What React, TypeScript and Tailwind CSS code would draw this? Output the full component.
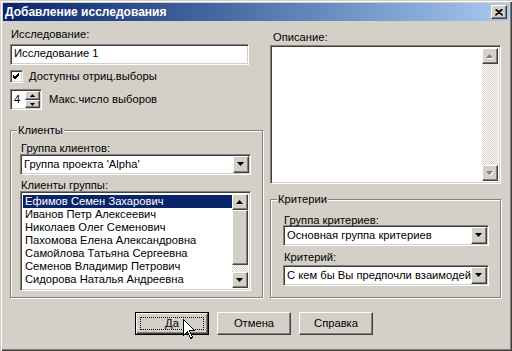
import React from "react";

const FONT = "font-['Liberation_Sans',Arial,sans-serif]";
const SUNKEN =
  "border border-t-[#808080] border-l-[#808080] border-b-white border-r-white shadow-[inset_1px_1px_0_#404040,inset_-1px_-1px_0_#d4d0c8]";
const RAISED =
  "border border-t-white border-l-white border-b-[#404040] border-r-[#404040] shadow-[inset_-1px_-1px_0_#808080]";
const HATCH =
  "bg-[repeating-conic-gradient(#ffffff_0_25%,#d4d0c8_0_50%)] bg-[length:2px_2px]";

function Arrow({ dir, disabled }: { dir: "up" | "down"; disabled?: boolean }) {
  const pts = dir === "down" ? "0,0 7,0 3.5,4" : "0,4 7,4 3.5,0";
  return (
    <svg width="8" height="5" viewBox="0 0 8 5" className="block">
      {disabled && <polygon points={pts} fill="#ffffff" transform="translate(1,1)" />}
      <polygon points={pts} fill={disabled ? "#808080" : "#000000"} />
    </svg>
  );
}

function ScrollBtn({ dir, disabled }: { dir: "up" | "down"; disabled?: boolean }) {
  return (
    <div className={`w-[16px] h-[16px] bg-[#d4d0c8] flex items-center justify-center ${RAISED}`}>
      <Arrow dir={dir} disabled={disabled} />
    </div>
  );
}

function Combo({ value, width }: { value: string; width: string }) {
  return (
    <div className={`${width} h-[21px] bg-white flex ${SUNKEN} p-[1px]`}>
      <div className="flex-1 overflow-hidden whitespace-nowrap pl-[2px] leading-[17px]">{value}</div>
      <div className={`w-[16px] h-[17px] bg-[#d4d0c8] flex items-center justify-center ${RAISED}`}>
        <Arrow dir="down" />
      </div>
    </div>
  );
}

function Group({ title, className, children }: { title: string; className: string; children: React.ReactNode }) {
  return (
    <div className={`relative border border-[#808080] shadow-[inset_1px_1px_0_#ffffff,1px_1px_0_#ffffff] ${className}`}>
      <span className="absolute -top-[7px] left-[6px] bg-[#d4d0c8] leading-[13px] px-[1px]">{title}</span>
      {children}
    </div>
  );
}

function Button({ label, isDefault }: { label: string; isDefault?: boolean }) {
  if (isDefault) {
    return (
      <div className="w-[74px] h-[23px] border border-black">
        <div className={`h-full bg-[#d4d0c8] flex items-center justify-center p-[3px] ${RAISED}`}>
          <div className="w-full h-full border border-dotted border-black flex items-center justify-center leading-[13px]">
            {label}
          </div>
        </div>
      </div>
    );
  }
  return (
    <div className={`w-[74px] h-[23px] bg-[#d4d0c8] flex items-center justify-center leading-[13px] ${RAISED}`}>
      {label}
    </div>
  );
}

const CLIENTS = [
  "Ефимов Семен Захарович",
  "Иванов Петр Алексеевич",
  "Николаев Олег Семенович",
  "Пахомова Елена Александровна",
  "Самойлова Татьяна Сергеевна",
  "Семенов Владимир Петрович",
  "Сидорова Наталья Андреевна",
  "Шишкова Анна Борисовна",
];

export default function App() {
  return (
    <div
      className={`relative w-[512px] h-[351px] bg-[#d4d0c8] p-[3px] flex flex-col text-[11.2px] text-black ${FONT} shadow-[inset_1px_1px_0_#d4d0c8,inset_2px_2px_0_#ffffff,inset_-1px_-1px_0_#404040,inset_-2px_-2px_0_#808080]`}
    >
      {/* Title bar */}
      <div className="h-[18px] bg-gradient-to-r from-[#0a246a] to-[#a6caf0] flex items-center justify-between pl-[2px] pr-[2px]">
        <span className="text-white font-bold text-[12px] leading-[18px]">Добавление исследования</span>
        <div className={`w-[16px] h-[14px] bg-[#d4d0c8] flex items-center justify-center ${RAISED}`}>
          <svg width="8" height="7" viewBox="0 0 8 7">
            <path d="M0.5 0.5 L7.5 6.5 M7.5 0.5 L0.5 6.5 M1.5 0.5 L7.5 6 M6.5 0.5 L0.5 6" stroke="#000" strokeWidth="1.2" />
          </svg>
        </div>
      </div>

      <div className="flex pl-[7px]">
        {/* Left column */}
        <div className="w-[254px] flex flex-col">
          <div className="mt-[7px] leading-[13px] pl-[1px]">Исследование:</div>
          <div className={`mt-[3px] w-[239px] h-[21px] bg-white ${SUNKEN} pl-[3px] leading-[17px]`}>Исследование 1</div>
          <div className="mt-[5px] flex items-center h-[13px]">
            <div className={`w-[13px] h-[13px] bg-white ${SUNKEN}`}>
              <svg width="11" height="11" viewBox="0 0 11 11" className="block" shapeRendering="crispEdges">
                <polyline points="2,4 4,6 8,2" stroke="#000" fill="none" strokeWidth="1" />
                <polyline points="2,5 4,7 8,3" stroke="#000" fill="none" strokeWidth="1" />
                <polyline points="2,6 4,8 8,4" stroke="#000" fill="none" strokeWidth="1" />
              </svg>
            </div>
            <span className="ml-[6px] leading-[13px]">Доступны отриц.выборы</span>
          </div>
          <div className="mt-[6px] flex items-center h-[21px]">
            <div className={`w-[32px] h-[21px] bg-white flex ${SUNKEN} p-[1px]`}>
              <div className="flex-1 pl-[2px] leading-[17px]">4</div>
              <div className="w-[15px] flex flex-col">
                <div className={`h-[9px] bg-[#d4d0c8] flex items-center justify-center ${RAISED}`}>
                  <svg width="5" height="3" viewBox="0 0 5 3"><polygon points="0,3 5,3 2.5,0" fill="#000" /></svg>
                </div>
                <div className={`h-[8px] bg-[#d4d0c8] flex items-center justify-center ${RAISED}`}>
                  <svg width="5" height="3" viewBox="0 0 5 3"><polygon points="0,0 5,0 2.5,3" fill="#000" /></svg>
                </div>
              </div>
            </div>
            <span className="ml-[7px] leading-[13px]">Макс.число выборов</span>
          </div>

          <Group title="Клиенты" className="mt-[20px] h-[168px] w-[253px] pl-[9px]">
            <div className="mt-[11px] leading-[13px] pl-[1px]">Группа клиентов:</div>
            <div className="mt-[-1px]">
              <Combo value="Группа проекта 'Alpha'" width="w-[231px]" />
            </div>
            <div className="mt-[4px] leading-[13px] pl-[1px]">Клиенты группы:</div>
            <div className={`mt-[-1px] w-[231px] h-[100px] bg-white flex ${SUNKEN} p-[2px]`}>
              <div className="flex-1 overflow-hidden pt-[1px]">
                {CLIENTS.map((c, i) => (
                  <div
                    key={c}
                    className={`h-[13px] leading-[13px] pl-[2px] whitespace-nowrap ${i === 0 ? "bg-[#0a246a] text-white" : ""}`}
                  >
                    {c}
                  </div>
                ))}
              </div>
              <div className="w-[16px] flex flex-col">
                <ScrollBtn dir="up" />
                <div className={`h-[55px] bg-[#d4d0c8] ${RAISED}`} />
                <div className={`flex-1 ${HATCH}`} />
                <ScrollBtn dir="down" />
              </div>
            </div>
          </Group>
        </div>

        {/* Right column */}
        <div className="ml-[6px] w-[231px] flex flex-col">
          <div className="mt-[10px] leading-[13px] pl-[3px]">Описание:</div>
          <div className={`mt-[1px] h-[139px] bg-white flex ${SUNKEN} p-[2px]`}>
            <div className="flex-1" />
            <div className="w-[16px] flex flex-col">
              <ScrollBtn dir="up" disabled />
              <div className={`flex-1 ${HATCH}`} />
              <ScrollBtn dir="down" disabled />
            </div>
          </div>

          <Group title="Критерии" className="mt-[15px] h-[99px] pl-[12px]">
            <div className="mt-[14px] leading-[13px] pl-[1px]">Группа критериев:</div>
            <div className="mt-[-2px]">
              <Combo value="Основная группа критериев" width="w-[206px]" />
            </div>
            <div className="mt-[5px] leading-[13px] pl-[1px]">Критерий:</div>
            <div className="mt-[1px]">
              <Combo value="С кем бы Вы предпочли взаимодействовать" width="w-[206px]" />
            </div>
          </Group>
        </div>
      </div>

      {/* Buttons */}
      <div className="mt-[14px] flex gap-[8px] pl-[132px]">
        <Button label="Да" isDefault />
        <Button label="Отмена" />
        <Button label="Справка" />
      </div>

      {/* Mouse cursor */}
      <svg
        width="13"
        height="21"
        viewBox="0 0 13 21"
        className="absolute left-[183px] top-[319px]"
        shapeRendering="crispEdges"
      >
        <polygon points="0.5,0.5 0.5,16.5 4.5,12.5 7.5,19.5 9.5,18.5 6.5,11.5 11.5,11.5" fill="#fff" stroke="#000" strokeWidth="1" />
      </svg>
    </div>
  );
}
